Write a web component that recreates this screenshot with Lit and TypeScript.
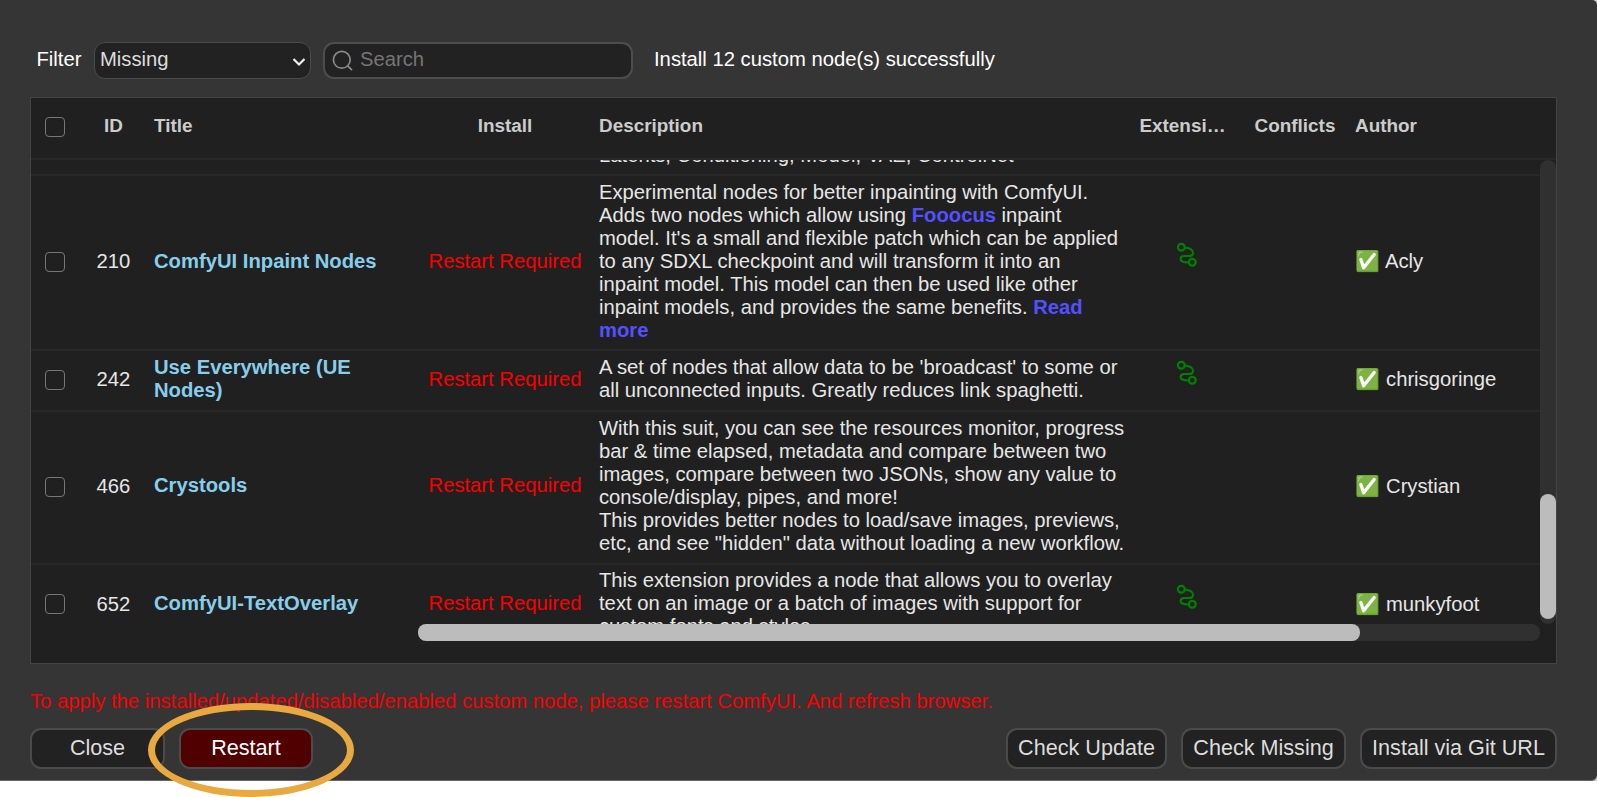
import { LitElement, html, css, svg, nothing } from "lit";
import { customElement } from "lit/decorators.js";

const routeIcon = html`<svg class="route" width="22" height="27" viewBox="0 0 22 27" fill="none" stroke="#008000" stroke-width="2.2">
  ${svg`<circle cx="5.3" cy="5.3" r="3.4"/><circle cx="16.3" cy="20.3" r="3.4"/>
  <path d="M8.8 5.6c4.6 0 8.3 2.3 8.3 5.2 0 2.2-1.8 3.2-4.2 3.2H8.4c-2.4 0-3.8 1.2-3.8 3 0 2.4 2.6 3.5 8.2 3.5"/>`}
</svg>`;

interface NodeRow {
  id: string;
  title: unknown;
  description: unknown;
  linked: boolean;
  author: string;
  size: string;
}

const rows: NodeRow[] = [
  {
    id: "210",
    title: "ComfyUI Inpaint Nodes",
    description: html`Experimental nodes for better inpainting with ComfyUI.<br>Adds two nodes which allow using <b class="link">Fooocus</b> inpaint<br>model. It's a small and flexible patch which can be applied<br>to any SDXL checkpoint and will transform it into an<br>inpaint model. This model can then be used like other<br>inpaint models, and provides the same benefits. <b class="link">Read<br>more</b>`,
    linked: true,
    author: "Acly",
    size: "h7",
  },
  {
    id: "242",
    title: html`Use Everywhere (UE<br>Nodes)`,
    description: html`A set of nodes that allow data to be 'broadcast' to some or<br>all unconnected inputs. Greatly reduces link spaghetti.`,
    linked: true,
    author: "chrisgoringe",
    size: "h2",
  },
  {
    id: "466",
    title: "Crystools",
    description: html`With this suit, you can see the resources monitor, progress<br>bar &amp; time elapsed, metadata and compare between two<br>images, compare between two JSONs, show any value to<br>console/display, pipes, and more!<br>This provides better nodes to load/save images, previews,<br>etc, and see "hidden" data without loading a new workflow.`,
    linked: false,
    author: "Crystian",
    size: "h6",
  },
  {
    id: "652",
    title: "ComfyUI-TextOverlay",
    description: html`This extension provides a node that allows you to overlay<br>text on an image or a batch of images with support for<br>custom fonts and styles.`,
    linked: true,
    author: "munkyfoot",
    size: "h3",
  },
];

@customElement("app-root")
export class AppRoot extends LitElement {
  static styles = css`
    :host { display: block; position: relative; width: 1597px; height: 797px; overflow: hidden; background: #fff;
      font-family: "Liberation Sans", Arial, sans-serif; font-size: 20.24px; line-height: 23px; color: #fff; }
    * { box-sizing: border-box; }
    .dialog { height: 781px; background: #353535; border-bottom: 1px solid #666; border-radius: 0 5px 6px 0;
      padding: 42px 40px 0 30px; display: flex; flex-direction: column; }
    .corner { background: #c4c4c4; height: 781px; }
    .toolbar { display: flex; height: 37px; align-items: center; white-space: nowrap; }
    .label { width: 64px; padding-left: 6.5px; margin-top: -2px; }
    .select { width: 217px; height: 37px; border: 1px solid #4a4a4a; border-radius: 11px; background: #222; color: #ddd;
      display: flex; align-items: center; justify-content: space-between; padding: 0 4px 2px 5px; }
    .search { width: 310px; height: 37px; margin-left: 12px; border: 2px solid #4d4d4d; border-radius: 11px; background: #222;
      color: #757575; display: flex; align-items: center; gap: 6.5px; padding: 0 0 2px 6.5px; }
    .search svg { margin-top: 3px; }
    .chev { margin-top: 4px; }
    .status { margin-left: 21px; margin-top: -2px; }
    .table { margin-top: 18px; height: 567px; border: 1px solid #444; background: #202020; display: flex; flex-direction: column; flex: none; }
    .grid { display: grid; grid-template-columns: 48px 69px 269px 176px 537px 105px 120px 1fr; align-items: center; white-space: nowrap; }
    .head { height: 62px; border-bottom: 2px solid #282828; font-weight: bold; font-size: 18.9px; color: #ccc; padding-bottom: 6px; }
    .center { text-align: center; justify-self: center; }
    .box { width: 20px; height: 20px; border: 1.5px solid #777; border-radius: 4px; justify-self: center; margin-top: 2px; }
    .head .box { margin-top: 3px; }
    .pad { padding-left: 6px; }
    .view { display: flex; height: 464px; }
    .rows { flex: 1; height: 464px; overflow: hidden; color: #e6e6e6; }
    .row { border-bottom: 2px solid #282828; padding-bottom: 3px; }
    .tail { height: 16px; overflow: hidden; align-content: end; padding-bottom: 7px; }
    .tail .desc { grid-column: 5; }
    .h7 { height: 175px; } .h2 { height: 61px; } .h6 { height: 153px; } .h3 { height: 84px; padding-bottom: 6px; }
    .h6 .title, .h6 .red { margin-top: -2px; }
    .h3 .num, .h3 .author, .h3 .box { margin-top: 2px; }
    .title { color: #87ceeb; font-weight: bold; }
    .red { color: #f80000; }
    .link { color: #5350ff; }
    .route { display: block; margin: -12px 0 0 9px; }
    .author { display: flex; align-items: center; white-space: pre; }
    .mark { font-size: 20px; width: 25.4px; font-family: "Noto Color Emoji", sans-serif; }
    .vtrack { width: 16px; height: 464px; border-radius: 8px; background: #303030; padding-top: 334px; }
    .vthumb { height: 125px; border-radius: 8px; background: #bcbcbc; }
    .htrack { margin-left: 387px; margin-right: 16px; height: 17px; border-radius: 8px; background: #303030; flex: none; }
    .hthumb { width: 942px; height: 17px; border-radius: 8px; background: #bcbcbc; }
    .notice { margin-top: 26px; white-space: nowrap; height: 23px; }
    .buttons { display: flex; margin-top: 15px; font-size: 21.6px; gap: 14px; flex: none; }
    .btn { height: 41px; border: 2px solid #4b4b4b; border-radius: 11px; background: #222; color: #ddd;
      display: flex; align-items: center; justify-content: center; padding-bottom: 3px; white-space: nowrap; }
    .w1 { width: 135px; } .w2 { width: 161px; margin-left: auto; } .w3 { width: 165px; } .w4 { width: 197px; }
    .restart { width: 134px; background: #500000; color: #fff; }
    .ring { position: absolute; left: 148px; top: 702.5px; width: 206px; height: 94px; border: 7px solid #e8a941; border-radius: 50%; }
  `;

  render() {
    return html`<div class="corner"><div class="dialog">
      <div class="toolbar">
        <div class="label">Filter</div>
        <div class="select"><span>Missing</span>
          <svg class="chev" width="14" height="10" viewBox="0 0 14 10" fill="none" stroke="#eee" stroke-width="2.2"><path d="M1.5 2 7 7.5 12.5 2"/></svg></div>
        <div class="search">
          <svg width="22" height="22" viewBox="0 0 22 22" fill="none" stroke="#8a8a8a" stroke-width="1.7"><circle cx="9.8" cy="9.8" r="8.4"/><path d="m15.6 15.8 4.4 4.4"/></svg>
          <span>Search</span></div>
        <div class="status">Install 12 custom node(s) successfully</div>
      </div>
      <div class="table">
        <div class="grid head">
          <span class="box"></span><span class="center">ID</span><span class="pad">Title</span><span class="center">Install</span>
          <span class="pad">Description</span><span class="center">Extensi…</span><span class="center">Conflicts</span><span>Author</span>
        </div>
        <div class="view">
          <div class="rows">
            <div class="grid row tail"><span class="pad desc">Latents, Conditioning, Model, VAE, ControlNet</span></div>
            ${rows.map((r) => html`<div class="grid row ${r.size}">
              <span class="box"></span><span class="center num">${r.id}</span><span class="pad title">${r.title}</span>
              <span class="center red">Restart Required</span><span class="pad">${r.description}</span>
              <span class="center">${r.linked ? routeIcon : nothing}</span><span></span>
              <span class="author"><span class="mark">✅</span>${" " + r.author}</span>
            </div>`)}
          </div>
          <div class="vtrack"><div class="vthumb"></div></div>
        </div>
        <div class="htrack"><div class="hthumb"></div></div>
      </div>
      <div class="notice red">To apply the installed/updated/disabled/enabled custom node, please restart ComfyUI. And refresh browser.</div>
      <div class="buttons">
        <div class="btn w1">Close</div><div class="btn restart">Restart</div>
        <div class="btn w2">Check Update</div><div class="btn w3">Check Missing</div><div class="btn w4">Install via Git URL</div>
      </div>
    </div></div><div class="ring"></div>`;
  }
}
